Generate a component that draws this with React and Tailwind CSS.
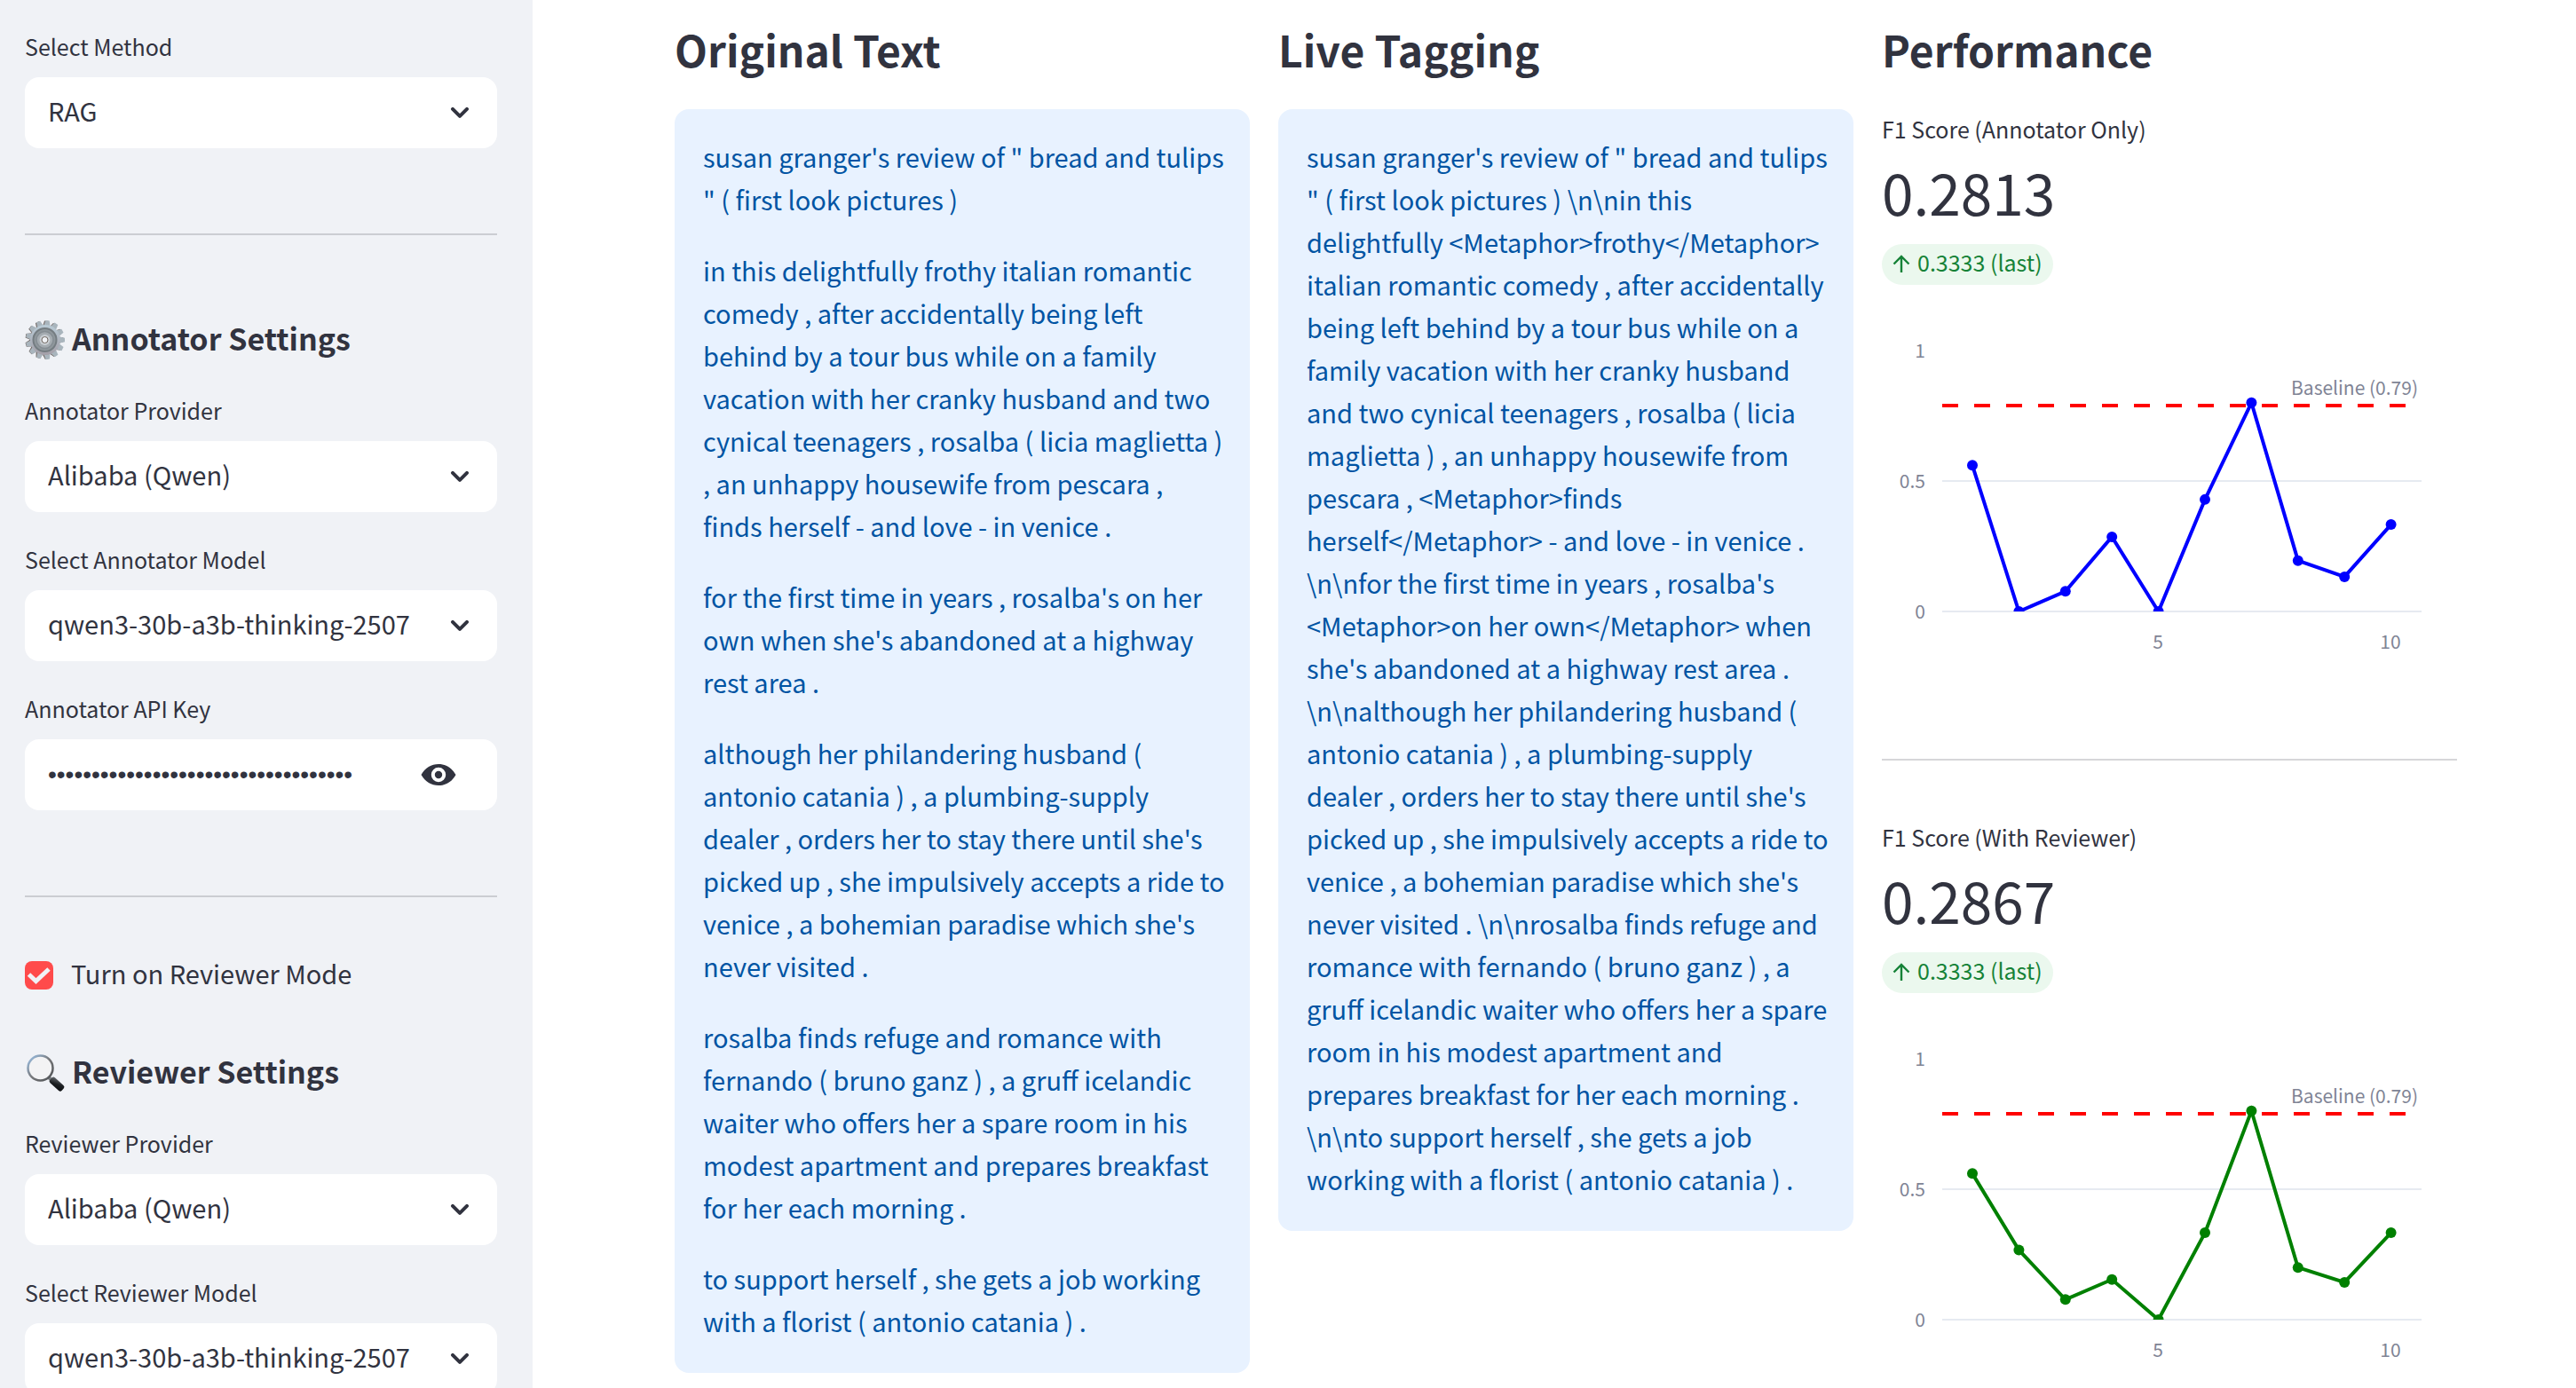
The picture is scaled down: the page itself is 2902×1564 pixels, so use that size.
import { useId } from "react";

const originalText = [
  `susan granger's review of " bread and tulips " ( first look pictures )`,
  "in this delightfully frothy italian romantic comedy , after accidentally being left behind by a tour bus while on a family vacation with her cranky husband and two cynical teenagers , rosalba ( licia maglietta ) , an unhappy housewife from pescara , finds herself - and love - in venice .",
  "for the first time in years , rosalba's on her own when she's abandoned at a highway rest area .",
  "although her philandering husband ( antonio catania ) , a plumbing-supply dealer , orders her to stay there until she's picked up , she impulsively accepts a ride to venice , a bohemian paradise which she's never visited .",
  "rosalba finds refuge and romance with fernando ( bruno ganz ) , a gruff icelandic waiter who offers her a spare room in his modest apartment and prepares breakfast for her each morning .",
  "to support herself , she gets a job working with a florist ( antonio catania ) .",
];

const taggedText = [
  String.raw`susan granger's review of " bread and tulips " ( first look pictures ) \n\nin this delightfully <Metaphor>frothy</Metaphor> italian romantic comedy , after accidentally being left behind by a tour bus while on a family vacation with her cranky husband and two cynical teenagers , rosalba ( licia maglietta ) , an unhappy housewife from pescara , <Metaphor>finds herself</Metaphor> - and love - in venice . \n\nfor the first time in years , rosalba's <Metaphor>on her own</Metaphor> when she's abandoned at a highway rest area . \n\nalthough her philandering husband ( antonio catania ) , a plumbing-supply dealer , orders her to stay there until she's picked up , she impulsively accepts a ride to venice , a bohemian paradise which she's never visited . \n\nrosalba finds refuge and romance with fernando ( bruno ganz ) , a gruff icelandic waiter who offers her a spare room in his modest apartment and prepares breakfast for her each morning . \n\nto support herself , she gets a job working with a florist ( antonio catania ) .`,
];

const annotatorScores = [0.56, 0, 0.077, 0.286, 0, 0.429, 0.8, 0.195, 0.133, 0.333];
const reviewerScores = [0.56, 0.267, 0.077, 0.154, 0, 0.333, 0.8, 0.2, 0.143, 0.333];

function Field({ label, id, children }) {
  return (
    <div>
      <label htmlFor={id} className="mb-2 block h-12 text-[25px] leading-[43px]">
        {label}
      </label>
      {children}
    </div>
  );
}

function SelectField({ label, options }) {
  const id = useId();
  return (
    <Field label={label} id={id}>
      <div className="relative">
        <select
          id={id}
          className="h-20 w-full appearance-none rounded-2xl bg-white pr-20 pb-1 pl-[26px] text-[29px] outline-none"
        >
          {options.map((o) => (
            <option key={o}>{o}</option>
          ))}
        </select>
        <svg
          viewBox="0 0 24 24"
          className="pointer-events-none absolute top-5 right-[22px] size-10"
          fill="none"
          stroke="currentColor"
          strokeWidth="2.4"
          strokeLinecap="round"
          strokeLinejoin="round"
        >
          <path d="M7.2 9.5 12 14.3 16.8 9.5" />
        </svg>
      </div>
    </Field>
  );
}

function PasswordField({ label }) {
  const id = useId();
  return (
    <Field label={label} id={id}>
      <div className="flex h-20 items-center rounded-2xl bg-white pr-[46px] pl-[26px]">
        <input
          id={id}
          type="password"
          defaultValue="sk-0123456789abcdef0123456789abcdef"
          className="h-full min-w-0 flex-1 bg-transparent font-['Liberation_Sans',sans-serif] text-[28px] outline-none"
        />
        <button type="button" aria-label="Show password" className="shrink-0">
          <svg viewBox="0 0 40 40" className="size-10" fill="currentColor" fillRule="evenodd">
            <path d="M20 8C12 8 5 12 .5 20 5 28 12 32 20 32s15-4 19.500-12C35 12 28 8 20 8zm0 20.200a8.200 8.200 0 1 1 0-16.400 8.200 8.200 0 0 1 0 16.400zm0-4a4.200 4.200 0 1 0 0-8.400 4.200 4.200 0 0 0 0 8.400z" />
          </svg>
        </button>
      </div>
    </Field>
  );
}

function GearIcon() {
  const teeth = Array.from({ length: 13 }, (_, i) => (i * 360) / 13);
  return (
    <svg viewBox="0 0 46 46" className="size-[46px] shrink-0">
      <defs>
        <linearGradient id="gear" x1="0" y1="0" x2="0" y2="1">
          <stop offset="0" stopColor="#b9cbd6" />
          <stop offset="1" stopColor="#a49fa8" />
        </linearGradient>
      </defs>
      <g fill="#6e6460">
        {teeth.map((a) => (
          <path key={a} d="M19 8 20.500 1.500h4.500L27 8z" transform={`rotate(${a + 4} 22 23)`} />
        ))}
      </g>
      <g fill="#a9b5bd">
        {teeth.map((a) => (
          <path key={a} d="M19.500 8 21 1h4.500L27 8z" transform={`rotate(${a + 6} 23 23)`} />
        ))}
      </g>
      <circle cx="23" cy="23" r="17" fill="url(#gear)" />
      <circle cx="22.500" cy="23" r="13" fill="#8f979c" stroke="#747c81" strokeWidth="2" />
      <circle cx="22.500" cy="23" r="9.500" fill="#a4abb0" stroke="#858d93" strokeWidth="1.500" />
      <circle cx="22.500" cy="23" r="6" fill="#c9ced3" />
      <circle cx="22.500" cy="23" r="3.500" fill="#f0f2f6" stroke="#6f675f" strokeWidth="1" />
    </svg>
  );
}

function MagnifierIcon() {
  return (
    <svg viewBox="0 0 46 46" className="size-[46px] shrink-0">
      <defs>
        <linearGradient id="rim" x1="0" y1="0" x2="1" y2="1">
          <stop offset="0" stopColor="#9cc3ea" />
          <stop offset="0.500" stopColor="#77787a" />
          <stop offset="1" stopColor="#4c4f52" />
        </linearGradient>
        <linearGradient id="grip" x1="0" y1="1" x2="1" y2="0">
          <stop offset="0" stopColor="#0b0d0f" />
          <stop offset="0.500" stopColor="#1d2023" />
          <stop offset="1" stopColor="#6a6e72" />
        </linearGradient>
      </defs>
      <path d="M27 28l4 4" stroke="#7c7f83" strokeWidth="4" />
      <circle cx="17.500" cy="17.500" r="14" fill="#f3f3f4" stroke="url(#rim)" strokeWidth="2.500" />
      <rect x="-3.500" y="0" width="8" height="18" rx="2.500" fill="url(#grip)" transform="translate(29 30) rotate(-48)" />
    </svg>
  );
}

function SectionTitle({ icon, children }) {
  return (
    <h3 className="flex h-12 items-center gap-[7px] pb-1 text-[34px] leading-[40px] font-semibold">
      {icon}
      <span className="pb-1">{children}</span>
    </h3>
  );
}

function ColumnTitle({ children }) {
  return <h2 className="mb-8 h-[67px] text-[48px] leading-[63px] font-semibold">{children}</h2>;
}

function TextCard({ title, paragraphs }) {
  return (
    <section>
      <ColumnTitle>{title}</ColumnTitle>
      <div className="flex flex-col gap-8 rounded-2xl bg-[#e8f2ff] pt-[29px] pr-[27px] pb-[35px] pl-8 text-[29px] leading-[48px] text-[#0054a3]">
        {paragraphs.map((p) => (
          <p key={p}>{p}</p>
        ))}
      </div>
    </section>
  );
}

function ScoreChart({ values, color }) {
  const clipId = useId();
  const x = (i) => 102 + i * 52.4;
  const y = (v) => 336 - v * 294;
  const points = values.map((v, i) => [x(i), y(v)]);
  return (
    <svg viewBox="0 0 648 400" className="mt-8 h-auto w-full" role="img" aria-label="F1 score per sample">
      <clipPath id={clipId}>
        <rect x="68" y="42" width="540" height="294" />
      </clipPath>
      <path d="M68 189H608M68 336H608" stroke="#e6eaf1" strokeWidth="2" />
      <g clipPath={`url(#${clipId})`}>
        <polyline points={points.map((p) => p.join(",")).join(" ")} fill="none" stroke={color} strokeWidth="4" />
      </g>
      <path d="M68 104H608" stroke="#ff0000" strokeWidth="4" strokeDasharray="18 18" />
      <g clipPath={`url(#${clipId})`} fill={color}>
        {points.map(([cx, cy]) => (
          <circle key={cx} cx={cx} cy={cy} r="6" />
        ))}
      </g>
      <g fill="#808495" fontSize="21">
        <g textAnchor="end">
          <text x="49" y="50">1</text>
          <text x="49" y="197">0.5</text>
          <text x="49" y="344">0</text>
          <text x="604" y="92">Baseline (0.79)</text>
        </g>
        <g textAnchor="middle">
          <text x="311" y="378">5</text>
          <text x="573" y="378">10</text>
        </g>
      </g>
    </svg>
  );
}

function Metric({ label, value, delta, scores, color }) {
  return (
    <div>
      <div className="h-[46px] text-[25px] leading-[44px]">{label}</div>
      <div className="mb-2 h-[98px] text-[64px] leading-[93px]">{value}</div>
      <div className="flex h-[46px] w-fit items-center gap-2 rounded-full bg-[#ebf8ee] px-3 text-[25px] text-[#158237]">
        <svg viewBox="0 0 20 24" className="h-6 w-5" fill="none" stroke="currentColor" strokeWidth="2.400">
          <path d="M10 21V3M1.500 11.500 10 3l8.500 8.500" />
        </svg>
        <span className="pb-1">{delta}</span>
      </div>
      <ScoreChart values={scores} color={color} />
    </div>
  );
}

export default function App() {
  return (
    <div className="flex h-screen overflow-hidden bg-white font-['Noto_Sans_CJK_SC',sans-serif] text-[#31333f]">
      <aside className="w-[600px] shrink-0 overflow-hidden bg-[#f0f2f6] pt-[31px] pr-10 pl-7">
        <SelectField label="Select Method" options={["RAG"]} />
        <hr className="my-24 border-t-2 border-[#cbcdd2]" />
        <div className="flex flex-col gap-8">
          <SectionTitle icon={<GearIcon />}>Annotator Settings</SectionTitle>
          <SelectField label="Annotator Provider" options={["Alibaba (Qwen)"]} />
          <SelectField label="Select Annotator Model" options={["qwen3-30b-a3b-thinking-2507"]} />
          <PasswordField label="Annotator API Key" />
        </div>
        <hr className="mt-24 mb-16 border-t-2 border-[#cbcdd2]" />
        <label className="mb-16 flex h-12 items-center gap-5 text-[29px]">
          <span className="relative flex size-8">
            <input type="checkbox" defaultChecked className="size-8 appearance-none rounded-lg bg-[#ff4b4b]" />
            <svg viewBox="0 0 32 32" className="pointer-events-none absolute inset-0" fill="none" stroke="#f0f2f6" strokeWidth="5">
              <path d="M4.500 15 12.500 22.500 27 9" />
            </svg>
          </span>
          <span className="pb-1">Turn on Reviewer Mode</span>
        </label>
        <div className="flex flex-col gap-8">
          <SectionTitle icon={<MagnifierIcon />}>Reviewer Settings</SectionTitle>
          <SelectField label="Reviewer Provider" options={["Alibaba (Qwen)"]} />
          <SelectField label="Select Reviewer Model" options={["qwen3-30b-a3b-thinking-2507"]} />
        </div>
      </aside>
      <main className="grid flex-1 grid-cols-3 items-start gap-8 overflow-hidden pt-6 pr-[134px] pl-40">
        <TextCard title="Original Text" paragraphs={originalText} />
        <TextCard title="Live Tagging" paragraphs={taggedText} />
        <section>
          <ColumnTitle>Performance</ColumnTitle>
          <Metric label="F1 Score (Annotator Only)" value="0.2813" delta="0.3333 (last)" scores={annotatorScores} color="#0000ff" />
          <hr className="mt-[102px] mb-16 border-t-2 border-[#d6d6d9]" />
          <Metric label="F1 Score (With Reviewer)" value="0.2867" delta="0.3333 (last)" scores={reviewerScores} color="#008000" />
        </section>
      </main>
    </div>
  );
}
